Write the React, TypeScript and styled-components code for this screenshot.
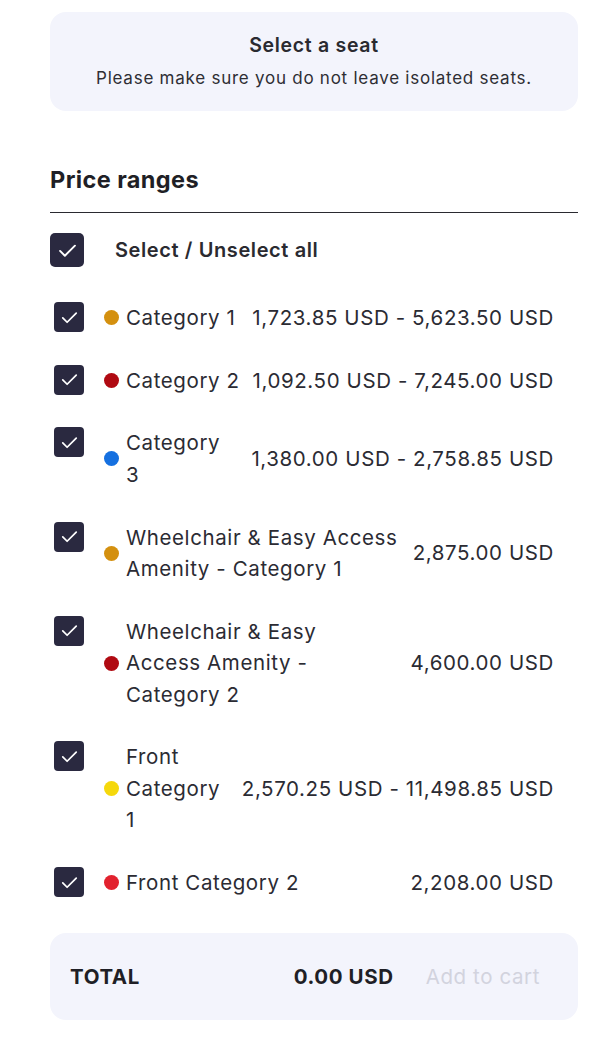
import React, { useState } from "react";
import styled, { createGlobalStyle } from "styled-components";

const GlobalStyle = createGlobalStyle`
  body {
    margin: 0;
    background: #ffffff;
    font-family: "Inter", "Noto Sans", sans-serif;
    color: #2b2b33;
  }
`;

const Page = styled.div`
  width: 528px;
  padding: 12px 22px 20px 50px;
`;

const InfoCard = styled.div`
  height: 99px;
  box-sizing: border-box;
  border-radius: 16px;
  background: #f3f4fc;
  display: flex;
  flex-direction: column;
  align-items: center;
  justify-content: center;
  gap: 11px;
  padding-bottom: 2px;
`;

const InfoTitle = styled.div`
  font-size: 19.5px;
  font-weight: 600;
  letter-spacing: 0.7px;
  color: #2a2a30;
`;

const InfoText = styled.div`
  font-size: 17px;
  letter-spacing: 0.75px;
  color: #2e2e34;
`;

const SectionTitle = styled.h2`
  margin: 54px 0 0;
  font-size: 23.5px;
  font-weight: 700;
  letter-spacing: 0.4px;
  color: #1f1f26;
  line-height: 30px;
  padding-bottom: 17px;
  border-bottom: 1.5px solid #2a2a30;
`;

const SelectAllRow = styled.label`
  display: flex;
  align-items: center;
  gap: 31px;
  margin-top: 20px;
  font-size: 20px;
  font-weight: 600;
  letter-spacing: 0.6px;
  color: #2a2a30;
  cursor: pointer;
`;

const Box = styled.span<{ size: number; checked: boolean }>`
  flex: none;
  width: ${p => p.size}px;
  height: ${p => p.size}px;
  border-radius: ${p => (p.size > 32 ? 5 : 4)}px;
  background: ${p => (p.checked ? "#2a2940" : "#ffffff")};
  border: ${p => (p.checked ? "none" : "2px solid #2a2940")};
  display: flex;
  align-items: center;
  justify-content: center;
  box-sizing: border-box;
`;

const List = styled.ul`
  list-style: none;
  margin: 35px 0 0;
  padding: 0;
  display: flex;
  flex-direction: column;
  gap: 31.2px;
`;

const Row = styled.li`
  display: flex;
  align-items: flex-start;
  padding: 0 24px 0 4px;
  font-size: 20.5px;
  letter-spacing: 0.6px;
  line-height: 31.5px;
  color: #2b2b33;
  cursor: pointer;
`;

const Body = styled.div`
  flex: 1;
  display: flex;
  align-items: center;
  justify-content: space-between;
  margin-left: 20px;
  gap: 6px;
`;

const Name = styled.div`
  display: flex;
  align-items: center;
  gap: 7px;
`;

const Dot = styled.span<{ color: string }>`
  flex: none;
  width: 15px;
  height: 15px;
  border-radius: 50%;
  background: ${p => p.color};
`;

const Lines = styled.div`
  display: flex;
  flex-direction: column;
`;

const Line = styled.span`
  white-space: nowrap;
`;

const Price = styled.span`
  white-space: nowrap;
  text-align: right;
`;

const TotalCard = styled.div`
  margin-top: 34px;
  height: 87px;
  box-sizing: border-box;
  border-radius: 16px;
  background: #f3f4fc;
  display: flex;
  align-items: center;
  padding: 0 38px 0 20px;
  font-size: 20.5px;
  letter-spacing: 0.6px;
`;

const TotalLabel = styled.span`
  font-weight: 700;
  color: #1f1f26;
  flex: 1;
`;

const TotalValue = styled.span`
  font-weight: 700;
  color: #1f1f26;
`;

const CartButton = styled.button`
  margin-left: 32px;
  border: none;
  background: none;
  padding: 0;
  font: inherit;
  letter-spacing: inherit;
  color: #d2d3de;
`;

function Check({ size, checked }: { size: number; checked: boolean }) {
  const s = Math.round(size * 0.62);
  return (
    <Box size={size} checked={checked}>
      {checked && (
        <svg width={s} height={s} viewBox="0 0 24 24" fill="none">
          <path
            d="M3.5 12.5l5.5 5.5L20.5 6.5"
            stroke="#ffffff"
            strokeWidth="2.2"
            strokeLinecap="round"
            strokeLinejoin="round"
          />
        </svg>
      )}
    </Box>
  );
}

interface IPriceRange {
  id: number;
  color: string;
  lines: string[];
  price: string;
}

const ranges: IPriceRange[] = [
  { id: 1, color: "#d4900f", lines: ["Category 1"], price: "1,723.85 USD - 5,623.50 USD" },
  { id: 2, color: "#b00a12", lines: ["Category 2"], price: "1,092.50 USD - 7,245.00 USD" },
  { id: 3, color: "#1570e0", lines: ["Category", "3"], price: "1,380.00 USD - 2,758.85 USD" },
  {
    id: 4,
    color: "#d4900f",
    lines: ["Wheelchair & Easy Access", "Amenity - Category 1"],
    price: "2,875.00 USD"
  },
  {
    id: 5,
    color: "#b00a12",
    lines: ["Wheelchair & Easy", "Access Amenity -", "Category 2"],
    price: "4,600.00 USD"
  },
  { id: 6, color: "#f5d80c", lines: ["Front", "Category", "1"], price: "2,570.25 USD - 11,498.85 USD" },
  { id: 7, color: "#e2222e", lines: ["Front Category 2"], price: "2,208.00 USD" }
];

function App() {
  const [selected, setSelected] = useState<number[]>(ranges.map(r => r.id));
  const allSelected = selected.length === ranges.length;

  const toggle = (id: number) =>
    setSelected(prev =>
      prev.includes(id) ? prev.filter(x => x !== id) : [...prev, id]
    );

  return (
    <>
      <GlobalStyle />
      <Page>
        <InfoCard>
          <InfoTitle>Select a seat</InfoTitle>
          <InfoText>Please make sure you do not leave isolated seats.</InfoText>
        </InfoCard>

        <SectionTitle>Price ranges</SectionTitle>

        <SelectAllRow
          onClick={() => setSelected(allSelected ? [] : ranges.map(r => r.id))}
        >
          <Check size={34} checked={allSelected} />
          Select / Unselect all
        </SelectAllRow>

        <List>
          {ranges.map(range => (
            <Row key={range.id} onClick={() => toggle(range.id)}>
              <Check size={30} checked={selected.includes(range.id)} />
              <Body>
                <Name>
                  <Dot color={range.color} />
                  <Lines>
                    {range.lines.map((line, i) => (
                      <Line key={i}>{line}</Line>
                    ))}
                  </Lines>
                </Name>
                <Price>{range.price}</Price>
              </Body>
            </Row>
          ))}
        </List>

        <TotalCard>
          <TotalLabel>TOTAL</TotalLabel>
          <TotalValue>0.00 USD</TotalValue>
          <CartButton disabled>Add to cart</CartButton>
        </TotalCard>
      </Page>
    </>
  );
}

export default App;
